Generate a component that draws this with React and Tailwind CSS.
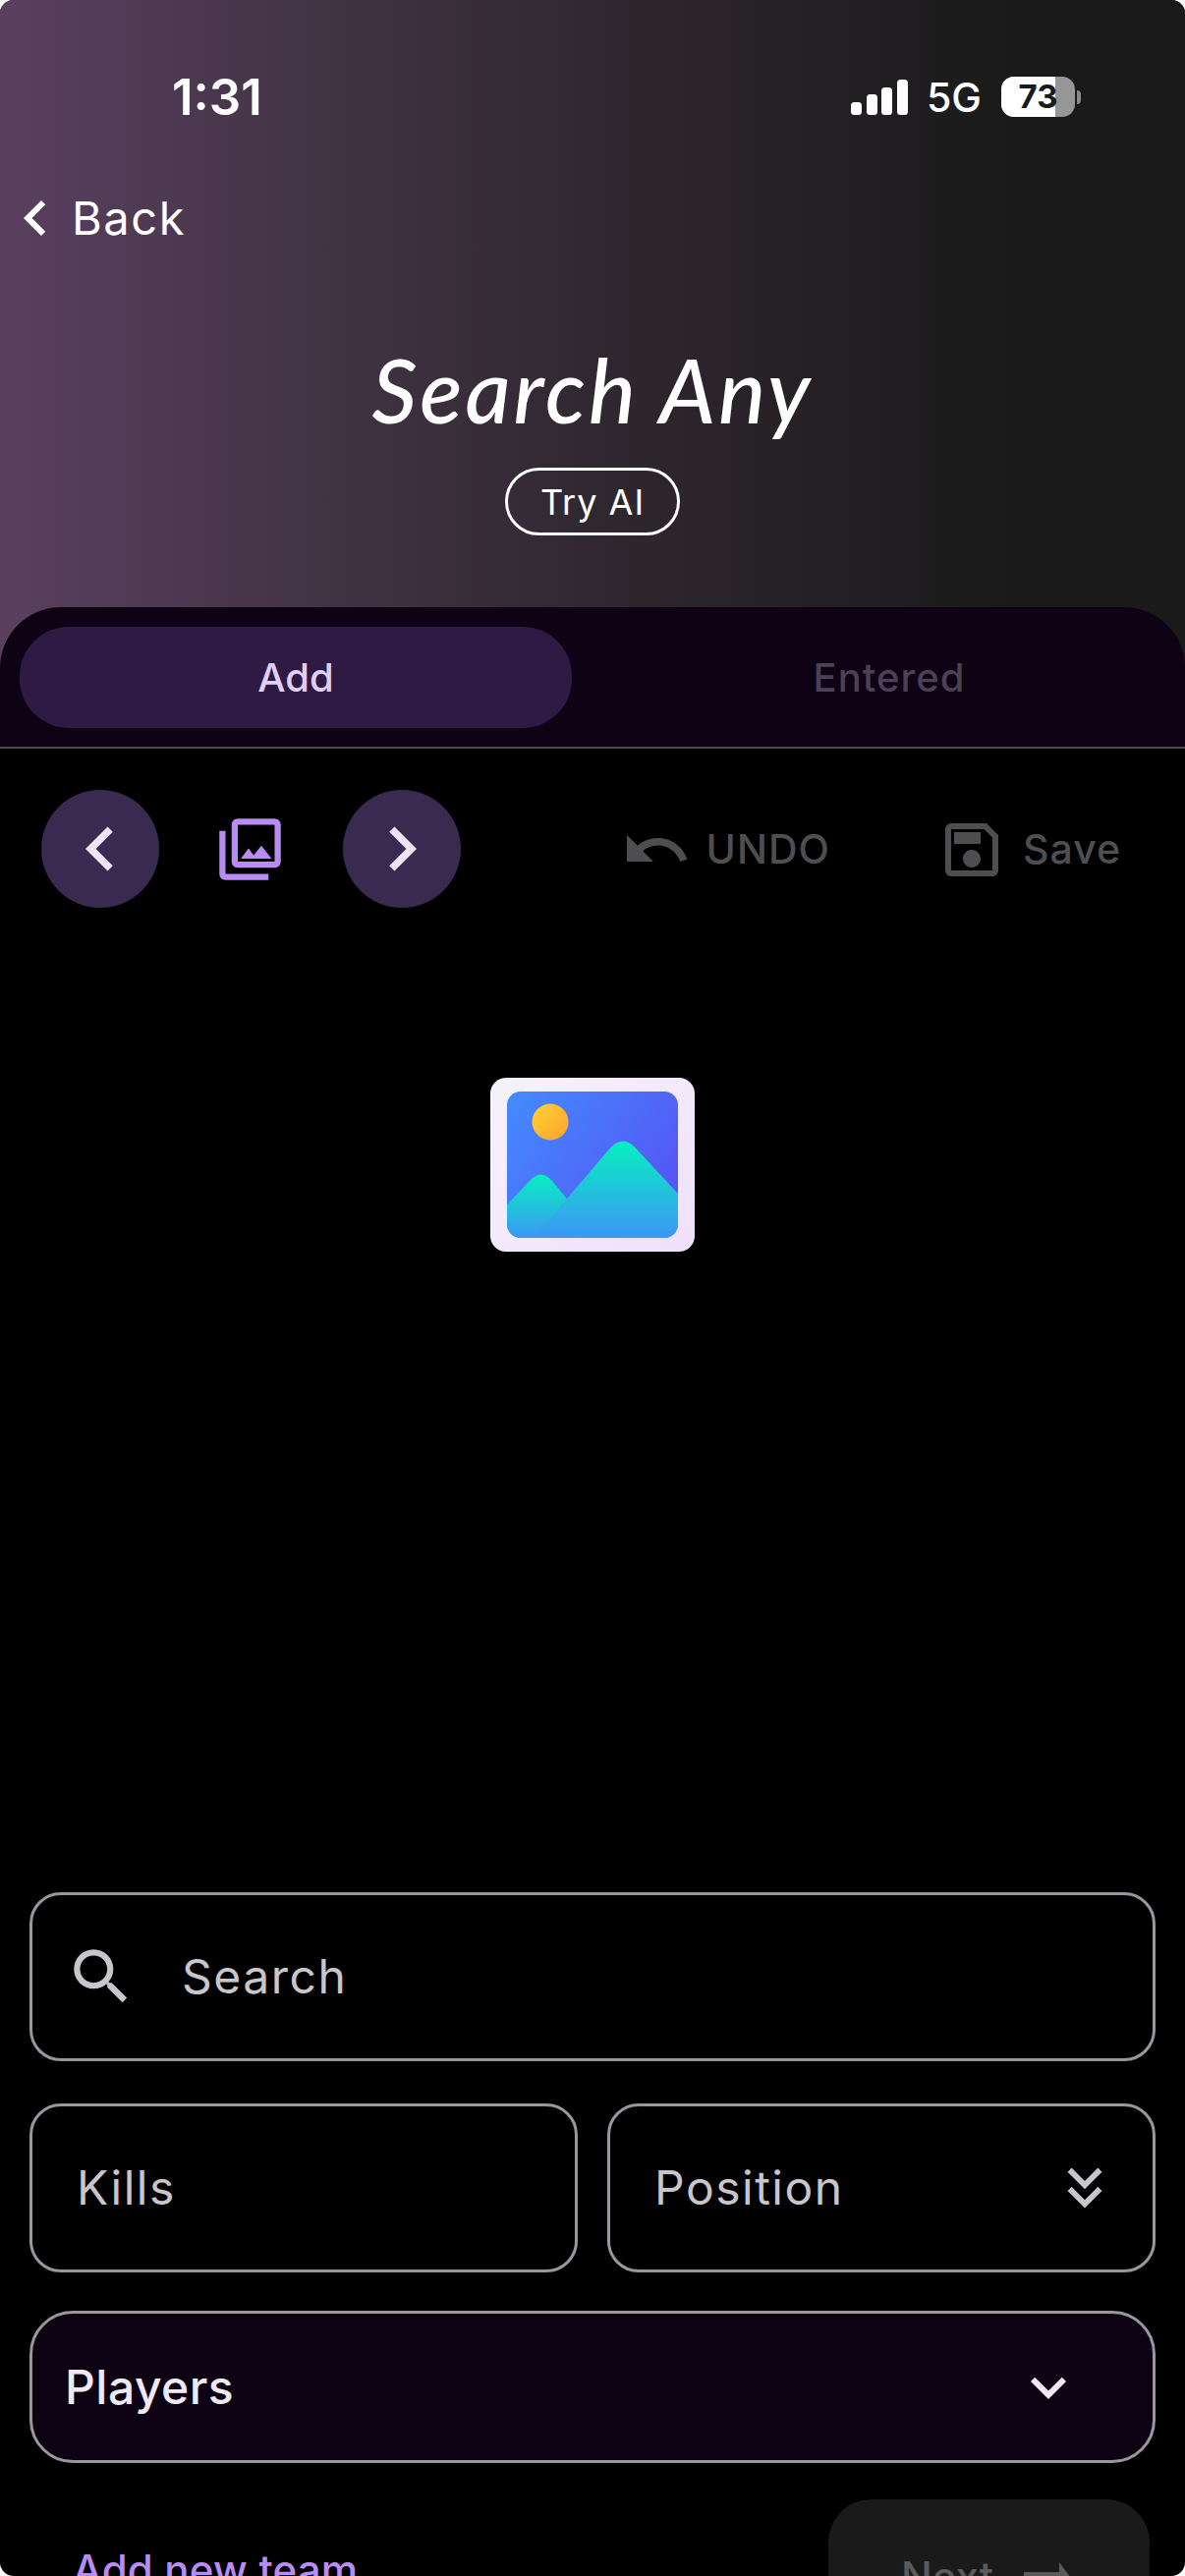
// src/App.jsx
import React from "react";
import {
  MdChevronLeft,
  MdChevronRight,
  MdOutlinePhotoLibrary,
  MdUndo,
  MdOutlineSave,
  MdSearch,
  MdKeyboardDoubleArrowDown,
  MdKeyboardArrowDown,
} from "react-icons/md";

function StatusBar() {
  return (
    <div className="flex h-[130px] items-end justify-between pl-[175px] pr-[106px] text-white">
      <span className="text-[51px] leading-[62px] font-semibold">1:31</span>
      <div className="mb-[11px] flex items-center">
        <svg width="58" height="36" viewBox="0 0 58 36" fill="#fff">
          <rect x="0" y="23" width="11" height="13" rx="3.5" />
          <rect x="16" y="15" width="11" height="21" rx="3.5" />
          <rect x="31" y="8" width="11" height="28" rx="3.5" />
          <rect x="47" y="0" width="11" height="36" rx="3.5" />
        </svg>
        <span className="ml-[19px] text-[41px] leading-[40px] font-medium">5G</span>
        <div className="relative ml-[20px] flex h-[41px] w-[75px] items-center justify-center overflow-hidden rounded-[13px] bg-[#969696]">
          <div className="absolute inset-y-0 left-0 w-[55px] bg-white" />
          <span className="relative text-[33px] leading-none font-bold text-[#1a1a1e]">73</span>
        </div>
        <div className="ml-[2px] h-[14px] w-[4px] rounded-r-full bg-[#8a8a8a]" />
      </div>
    </div>
  );
}

function PictureIcon() {
  return (
    <svg width="208" height="177" viewBox="0 0 208 177">
      <defs>
        <linearGradient id="frame" x1="0" y1="0" x2="1" y2="1">
          <stop offset="0" stopColor="#f6f3fb" />
          <stop offset="1" stopColor="#f0dffb" />
        </linearGradient>
        <linearGradient id="sky" x1="0" y1="0" x2="1" y2="0.6">
          <stop offset="0" stopColor="#438cfd" />
          <stop offset="1" stopColor="#5556f6" />
        </linearGradient>
        <linearGradient id="sun" x1="0" y1="0" x2="1" y2="1">
          <stop offset="0" stopColor="#ffd233" />
          <stop offset="1" stopColor="#fda32e" />
        </linearGradient>
        <linearGradient id="hill" x1="0" y1="0" x2="0" y2="1">
          <stop offset="0" stopColor="#06f0bf" />
          <stop offset="1" stopColor="#3c97f6" />
        </linearGradient>
        <clipPath id="pane">
          <rect x="17" y="14" width="174" height="149" rx="14" />
        </clipPath>
      </defs>
      <rect width="208" height="177" rx="16" fill="url(#frame)" />
      <g clipPath="url(#pane)">
        <rect x="17" y="14" width="174" height="149" fill="url(#sky)" />
        <circle cx="61" cy="45" r="18.5" fill="url(#sun)" />
        <path d="M17 129 L41 104 Q51 93 62 104 L92 140 L70 163 H17 Z" fill="url(#hill)" />
        <path d="M44 163 L119 75 Q135 54 151 75 L191 118 V163 Z" fill="url(#hill)" />
      </g>
    </svg>
  );
}

function Field({ children, className }) {
  return (
    <div className={`flex h-[172px] items-center rounded-[32px] border-[3px] border-[#9b969e] text-[48px] tracking-[1.5px] text-[#c9c6cb] ${className}`}>
      {children}
    </div>
  );
}

export default function App() {
  return (
    <div className="h-[2622px] w-[1206px] overflow-hidden rounded-[14px] bg-black font-['Inter',sans-serif]">
      <header className="h-[690px] bg-gradient-to-r from-[#59405f] via-[#302830] via-50% to-[#1a1a1a] to-85%">
        <StatusBar />
        <div className="mt-[56px] flex items-center text-white">
          <MdChevronLeft size={72} />
          <span className="ml-[1px] text-[47px] leading-[64px] tracking-[1.6px]">Back</span>
        </div>
        <div className="mt-[82px] flex flex-col items-center">
          <h1 className="text-[90px] leading-[112px] font-medium tracking-[3px] text-white italic font-['Lato',cursive]">
            Search Any
          </h1>
          <div className="mt-[24px] flex h-[69px] w-[178px] items-center justify-center rounded-full border-[3px] border-white text-[36px] tracking-[1px] text-white">
            Try AI
          </div>
        </div>
      </header>

      <nav className="relative -mt-[72px] flex h-[144px] items-start gap-[20px] rounded-t-[62px] border-b-[2px] border-[#4e4953] bg-[#0e0214] px-[20px] pt-[20px]">
        <div className="flex h-[103px] w-[562px] items-center justify-center rounded-[50px] bg-[#2e1a42] text-[40px] font-medium text-[#e0cff2]">
          Add
        </div>
        <div className="flex h-[103px] flex-1 items-center justify-center pl-[22px] text-[40px] font-medium tracking-[1px] text-[#4b4055]">
          Entered
        </div>
      </nav>

      <section className="mt-[42px] flex h-[120px] items-center pr-[65px] pl-[42px]">
        <div className="flex h-[120px] w-[120px] items-center justify-center rounded-full bg-[#3b2a50] text-[#f0e4fb]">
          <MdChevronLeft size={90} />
        </div>
        <MdOutlinePhotoLibrary size={75} className="mr-[57px] ml-[55px] text-[#b98cf5]" />
        <div className="flex h-[120px] w-[120px] items-center justify-center rounded-full bg-[#3b2a50] text-[#f0e4fb]">
          <MdChevronRight size={90} />
        </div>
        <div className="mt-[2px] ml-auto flex items-center text-[41px] font-medium tracking-[1px] text-[#4e4e50]">
          <MdUndo size={72} />
          <span className="ml-[15px]">UNDO</span>
          <MdOutlineSave size={72} className="ml-[108px]" />
          <span className="ml-[16px]">Save</span>
        </div>
      </section>

      <div className="mt-[173px] flex justify-center">
        <PictureIcon />
      </div>

      <div className="mt-[652px] flex flex-col px-[30px]">
        <Field className="pl-[33px]">
          <MdSearch size={74} className="text-[#c9c6cb]" />
          <span className="ml-[45px]">Search</span>
        </Field>
        <div className="mt-[43px] grid grid-cols-2 gap-[30px]">
          <Field className="pl-[45px]">Kills</Field>
          <Field className="justify-between pr-[34px] pl-[45px]">
            Position
            <MdKeyboardDoubleArrowDown size={70} />
          </Field>
        </div>
        <div className="mt-[39px] flex h-[155px] items-center justify-between rounded-[44px] border-[3px] border-[#9b969e] bg-[#0d0214] pr-[70px] pl-[33px] text-[48px] font-medium tracking-[0.5px] text-[#efe9f4]">
          Players
          <MdKeyboardArrowDown size={72} />
        </div>
      </div>

      <div className="mt-[37px] flex items-start justify-between pr-[36px] pl-[74px]">
        <span className="mt-[48px] text-[42px] leading-[48px] font-medium tracking-[0.2px] text-[#b98cf5]">Add new team</span>
        <div className="flex h-[160px] w-[327px] items-start rounded-[44px] bg-[#1a1a1a] pt-[47px] pl-[74px] text-[42px] font-medium text-[#5a5a5a]">
          Next
          <svg className="mt-[17px] ml-[31px]" width="48" height="32" viewBox="0 0 48 32" fill="#5a5a5a">
            <path d="M0 10 H36 V0 L48 16 L36 32 V22 H0 Z" />
          </svg>
        </div>
      </div>
    </div>
  );
}
